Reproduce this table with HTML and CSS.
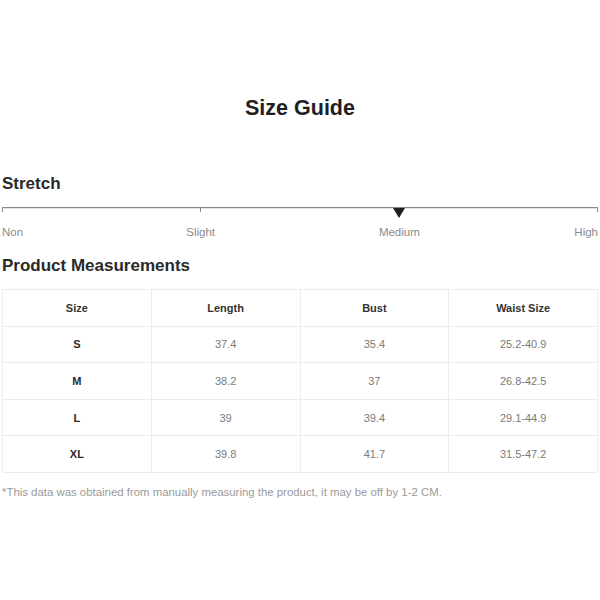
FILE: index.html
```html
<!DOCTYPE html>
<html>
<head>
<meta charset="utf-8">
<link rel="stylesheet" href="styles.css">
</head>
<body>
<div class="page">
  <h1 class="title">Size Guide</h1>
  <h2 class="section stretch-head">Stretch</h2>
  <svg class="scale" width="596" height="12" viewBox="0 0 596 12">
    <line x1="0" y1="0.5" x2="596" y2="0.5" stroke="#8a8a8a" stroke-width="1.4"/>
    <line x1="0.5" y1="0" x2="0.5" y2="5" stroke="#8a8a8a" stroke-width="1"/>
    <line x1="198.5" y1="0" x2="198.5" y2="5" stroke="#8a8a8a" stroke-width="1"/>
    <line x1="595.5" y1="0" x2="595.5" y2="5" stroke="#8a8a8a" stroke-width="1"/>
    <polygon points="391,1 403,1 397,11" fill="#1e1e1e"/>
  </svg>
  <div class="labels">
    <span class="lab-non">Non</span>
    <span class="lab-slight">Slight</span>
    <span class="lab-medium">Medium</span>
    <span class="lab-high">High</span>
  </div>
  <h2 class="section measure-head">Product Measurements</h2>
  <table class="sizes">
    <thead>
      <tr><th>Size</th><th>Length</th><th>Bust</th><th>Waist Size</th></tr>
    </thead>
    <tbody>
      <tr><td class="sz">S</td><td>37.4</td><td>35.4</td><td>25.2-40.9</td></tr>
      <tr><td class="sz">M</td><td>38.2</td><td>37</td><td>26.8-42.5</td></tr>
      <tr><td class="sz">L</td><td>39</td><td>39.4</td><td>29.1-44.9</td></tr>
      <tr><td class="sz">XL</td><td>39.8</td><td>41.7</td><td>31.5-47.2</td></tr>
    </tbody>
  </table>
  <p class="note">*This data was obtained from manually measuring the product, it may be off by 1-2 CM.</p>
</div>
</body>
</html>
```
FILE: styles.css
```css
html, body {
  margin: 0;
  padding: 0;
  background: #fff;
}
body {
  font-family: "Liberation Sans", Arial, sans-serif;
  color: #222;
}
.page {
  width: 596px;
  padding: 96px 2px 0 2px;
}
.title {
  margin: 0;
  font-size: 21.5px;
  line-height: 24px;
  font-weight: bold;
  text-align: center;
  color: #1e1e1e;
}
.section {
  margin: 0;
  font-size: 17px;
  line-height: 20px;
  font-weight: bold;
  color: #2a2a2a;
}
.stretch-head {
  margin-top: 54px;
}
.scale {
  display: block;
  margin-top: 13px;
}
.labels {
  display: grid;
  grid-template-columns: repeat(6, 1fr);
  margin-top: 6px;
  font-size: 11.5px;
  line-height: 14px;
  color: #8a8a8a;
}
.lab-non { grid-column: 1; text-align: left; }
.lab-slight { grid-column: 2 / 4; text-align: center; }
.lab-medium { grid-column: 4 / 6; text-align: center; }
.lab-high { grid-column: 6; text-align: right; }
.measure-head {
  margin-top: 17px;
}
.sizes {
  margin-top: 13px;
  width: 596px;
  table-layout: fixed;
  border-collapse: collapse;
  font-size: 11px;
}
.sizes th, .sizes td {
  border: 1px solid #ececec;
  height: 35.6px;
  padding: 0;
  text-align: center;
  vertical-align: middle;
}
.sizes th {
  font-weight: bold;
  color: #333;
}
.sizes td {
  color: #7a7a7a;
}
.sizes td.sz {
  font-weight: bold;
  color: #2a2a2a;
}
.note {
  margin: 12px 0 0 0;
  font-size: 11.4px;
  line-height: 14px;
  color: #9a9a9a;
}
```
